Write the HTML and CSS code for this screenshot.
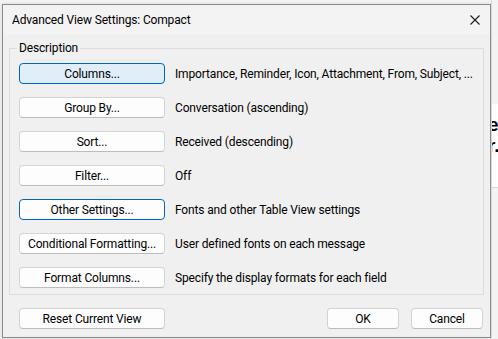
FILE: index.html
```html
<!DOCTYPE html>
<html>
<head>
<meta charset="utf-8">
<link rel="stylesheet" href="styles.css">
</head>
<body>
<div class="desk">
  <div class="window">
    <div class="titlebar">
      <span class="title">Advanced View Settings: Compact</span>
      <svg class="close" width="10" height="10" viewBox="0 0 10 10"><path d="M0.5 0.5L9.5 9.5M9.5 0.5L0.5 9.5" stroke="#1b1b1b" stroke-width="1.1" fill="none"/></svg>
    </div>
    <div class="content">
      <fieldset class="group">
        <legend class="legend">Description</legend>
        <div class="rows">
          <button class="btn hover">Columns...</button><span class="desc">Importance, Reminder, Icon, Attachment, From, Subject, ...</span>
          <button class="btn">Group By...</button><span class="desc">Conversation (ascending)</span>
          <button class="btn">Sort...</button><span class="desc">Received (descending)</span>
          <button class="btn">Filter...</button><span class="desc">Off</span>
          <button class="btn focus">Other Settings...</button><span class="desc">Fonts and other Table View settings</span>
          <button class="btn">Conditional Formatting...</button><span class="desc">User defined fonts on each message</span>
          <button class="btn">Format Columns...</button><span class="desc">Specify the display formats for each field</span>
        </div>
      </fieldset>
      <div class="footer">
        <button class="btn">Reset Current View</button>
        <div class="actions">
          <button class="btn small">OK</button>
          <button class="btn small">Cancel</button>
        </div>
      </div>
    </div>
  </div>
  <div class="behind">
    <div class="behind-top"></div>
    <div class="behind-pane">
      <div class="big">ee</div>
      <div class="big">r.</div>
    </div>
    <div class="behind-bottom"></div>
  </div>
</div>
</body>
</html>
```
FILE: styles.css
```css
* { box-sizing: border-box; }
html, body { margin: 0; padding: 0; }
body {
  width: 498px;
  height: 339px;
  overflow: hidden;
  background: #f3f3f3;
  font-family: Roboto, "Noto Sans", sans-serif;
  font-size: 12px;
  letter-spacing: -0.15px;
  color: #000;
}
.desk {
  display: flex;
  height: 339px;
}
.window {
  flex: none;
  width: 489px;
  height: 334px;
  margin: 4px 0 0 2px;
  border: 1px solid #8c8c8c;
  background: #f0f0f0;
  display: flex;
  flex-direction: column;
  box-shadow: 0 0 3px rgba(0,0,0,0.15);
}
.titlebar {
  height: 30px;
  background: #f3f3f3;
  display: flex;
  align-items: center;
  justify-content: space-between;
  padding: 0 10px 0 9px;
}
.title { line-height: 16px; }
.close { display: block; }
.content {
  padding: 5px 6px 0 6px;
}
.group {
  margin: 0;
  padding: 7px 9px 6px 9px;
  border: 1px solid #dcdcdc;
  min-width: 0;
}
.legend {
  padding: 0 2px;
  margin-left: -2px;
  line-height: 16px;
}
.rows {
  display: grid;
  grid-template-columns: 146px 1fr;
  column-gap: 10px;
  row-gap: 13px;
  align-items: center;
}
.btn {
  font-family: inherit;
  font-size: 12px;
  letter-spacing: inherit;
  color: #000;
  height: 21px;
  width: 146px;
  padding: 0;
  margin: 0;
  background: #fdfdfd;
  border: 1px solid #d3d3d3;
  border-bottom-color: #bcbcbc;
  border-radius: 4px;
  line-height: 18px;
  white-space: nowrap;
}
.btn.hover {
  background: #e0eef9;
  border-color: #0067c0;
}
.btn.focus {
  border-color: #0067c0;
}
.btn.small { width: 72px; }
.desc { white-space: nowrap; line-height: 16px; }
.footer {
  display: flex;
  justify-content: space-between;
  padding: 13px 1px 0 10px;
}
.actions {
  display: flex;
  gap: 12px;
}
.behind {
  flex: 1;
  min-width: 0;
  overflow: hidden;
  display: flex;
  flex-direction: column;
  border-left: 1px solid #d8d8d8;
}
.behind-top { height: 104px; background: #f3f3f3; }
.behind-pane {
  height: 83px;
  background: #ffffff;
  padding-top: 10px;
}
.big {
  font-family: "Liberation Sans", sans-serif;
  font-weight: bold;
  font-size: 19px;
  letter-spacing: 0;
  line-height: 21px;
  margin-left: -4px;
  white-space: nowrap;
}
.behind-bottom { flex: 1; background: #f3f3f3; border-top: 1px solid #d8d8d8; }
```
